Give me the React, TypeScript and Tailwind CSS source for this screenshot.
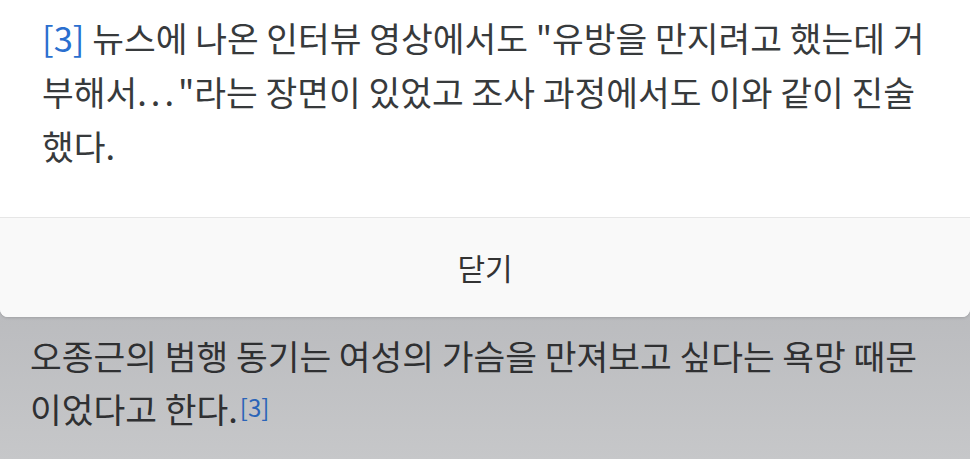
import React from 'react';

const FONT = { fontFamily: '"Noto Sans CJK KR", "Noto Sans", sans-serif' };

export default function App() {
  return (
    <div
      className="relative h-[459px] w-[970px] overflow-hidden bg-gradient-to-b from-[#a3a4a9] to-[#c6c7c9]"
      style={FONT}
    >
      {/* footnote sheet */}
      <div className="rounded-b-lg bg-white shadow-[0_1px_3px_rgba(0,0,0,0.15)]">
        <div className="whitespace-nowrap pb-[45px] pl-[42px] pt-[10px] text-[34.5px] leading-[54px] text-[#373a3c]">
          <span className="text-[#2a6fcf]">[3]</span> 뉴스에 나온 인터뷰 영상에서도 "유방을 만지려고 했는데 거
          <br />
          부해서<span className="tracking-[4px]">...</span>"라는 장면이 있었고 조사 과정에서도 이와 같이 진술
          <br />
          했다.
        </div>
        <div className="flex h-[100px] items-center justify-center rounded-b-lg border-t border-[#e6e6e6] bg-[#f9f9f9] text-[30px] text-[#333]">
          닫기
        </div>
      </div>

      {/* dimmed article text */}
      <div className="whitespace-nowrap px-[30px] pt-[12px] text-[34.5px] leading-[53px] text-[#2f3032]">
        오종근의 범행 동기는 여성의 가슴을 만져보고 싶다는 욕망 때문
        <br />
        이었다고 한다.
        <sup className="relative -top-[6px] ml-[2px] text-[24px] text-[#2a64b8]">[3]</sup>
      </div>
    </div>
  );
}
